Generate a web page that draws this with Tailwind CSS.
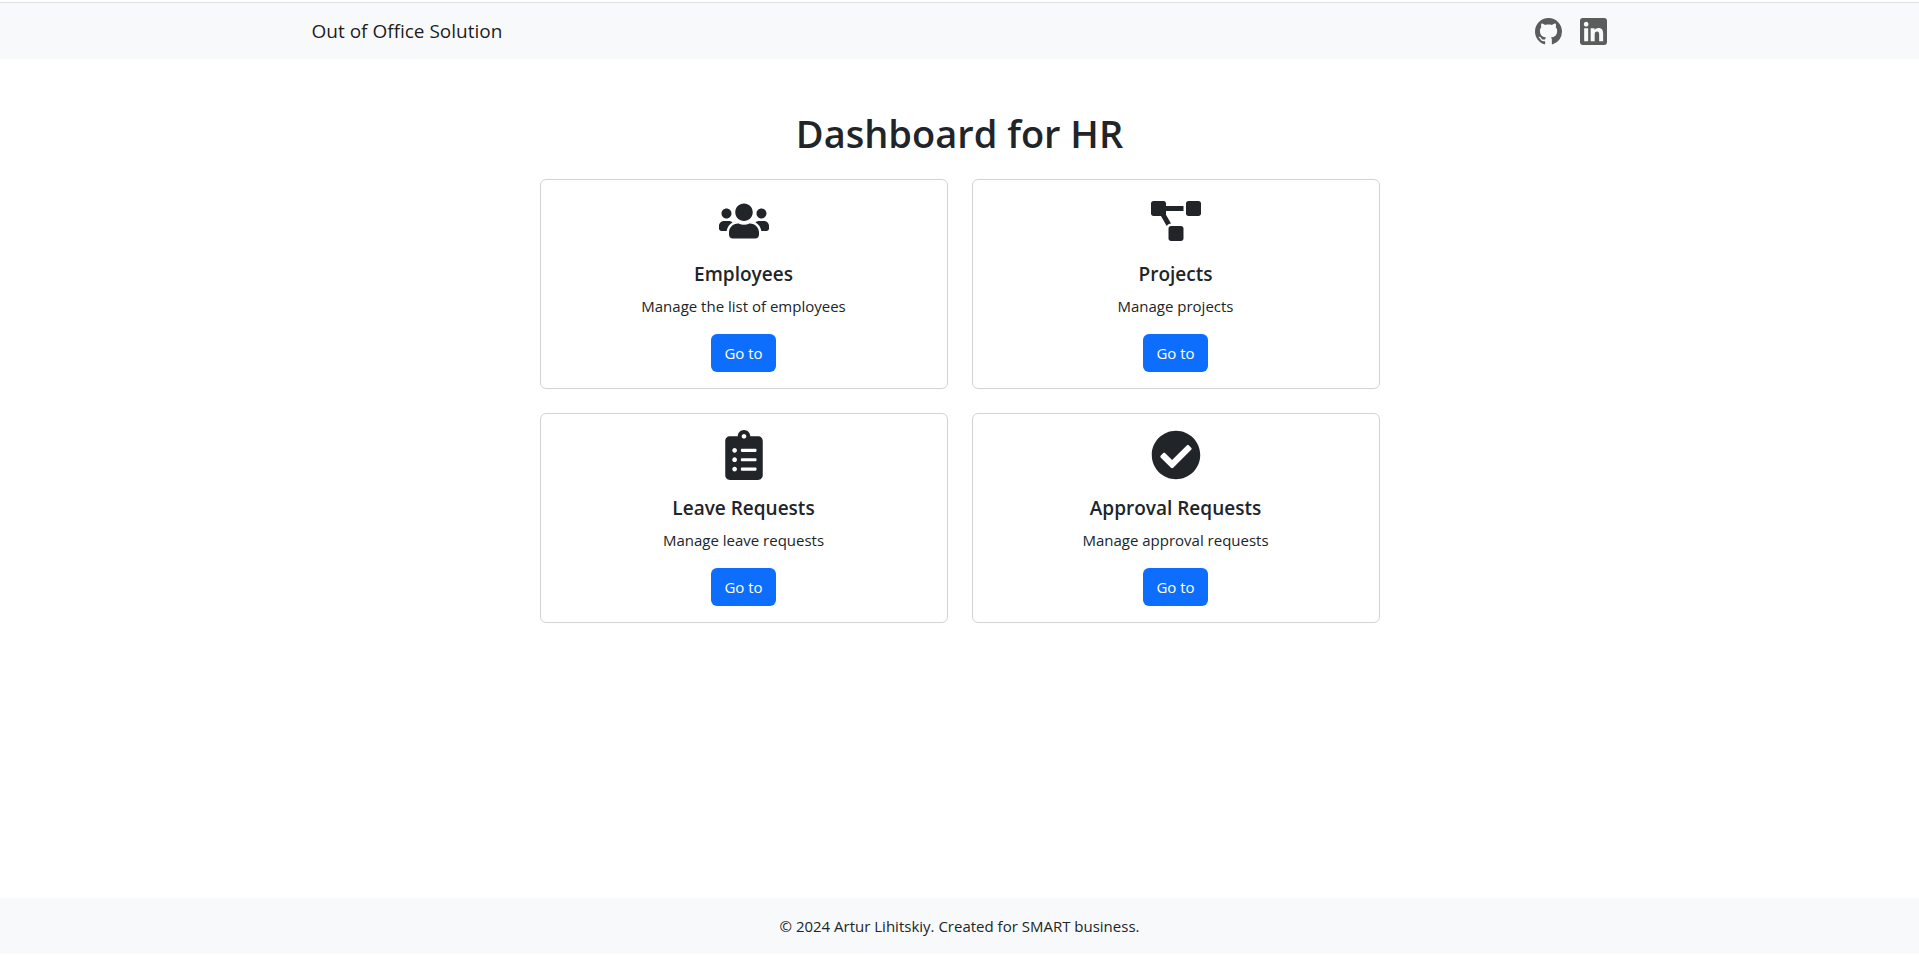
<!DOCTYPE html>
<html lang="en">
<head>
<meta charset="utf-8">
<meta name="viewport" content="width=device-width, initial-scale=1">
<title>Out of Office Solution</title>
<script src="https://cdn.jsdelivr.net/npm/@tailwindcss/browser@4"></script>
</head>
<body class="flex min-h-screen flex-col bg-white pt-[2px] pb-px font-['Open_Sans',sans-serif] text-[15px] leading-6 text-[#212529]">
<header class="border-t border-[#dee2e6] bg-[#f8f9fa]">
  <nav class="mx-auto flex h-14 w-full max-w-[1320px] items-center justify-between pr-[13px] pl-3">
    <a href="#" class="text-[19px] leading-[30px] text-black/90">Out of Office Solution</a>
    <div class="flex items-center gap-[18px] text-[#5c5c5c]">
      <a href="#" aria-label="GitHub"><svg class="size-[27px]" viewBox="0 0 16 16" fill="currentColor"><path d="M8 0C3.58 0 0 3.58 0 8c0 3.54 2.29 6.53 5.47 7.59.4.07.55-.17.55-.38 0-.19-.01-.82-.01-1.49-2.01.37-2.53-.49-2.69-.94-.09-.23-.48-.94-.82-1.13-.28-.15-.68-.52-.01-.53.63-.01 1.08.58 1.23.82.72 1.21 1.87.87 2.33.66.07-.52.28-.87.51-1.07-1.78-.2-3.64-.89-3.64-3.95 0-.87.31-1.59.82-2.15-.08-.2-.36-1.02.08-2.12 0 0 .67-.21 2.2.82.64-.18 1.32-.27 2-.27s1.36.09 2 .27c1.53-1.04 2.2-.82 2.2-.82.44 1.1.16 1.92.08 2.12.51.56.82 1.27.82 2.15 0 3.07-1.87 3.75-3.65 3.95.29.25.54.73.54 1.48 0 1.07-.01 1.93-.01 2.2 0 .21.15.46.55.38A8.01 8.01 0 0 0 16 8c0-4.42-3.58-8-8-8"/></svg></a>
      <a href="#" aria-label="LinkedIn"><svg class="size-[27px]" viewBox="0 0 448 448" fill="currentColor"><path d="M404 0H44C19.700 0 0 19.700 0 44v360c0 24.300 19.700 44 44 44h360c24.300 0 44-19.700 44-44V44C448 19.700 428.300 0 404 0zM135.400 384H69V170.200h66.500V384zm-33.200-243c-21.300 0-38.500-17.300-38.500-38.500S80.900 64 102.200 64c21.200 0 38.500 17.300 38.500 38.500 0 21.300-17.200 38.500-38.500 38.500zm282.100 243h-66.400V280c0-24.800-.5-56.700-34.500-56.700-34.600 0-39.900 27-39.900 54.900V384h-66.400V170.200h63.700v29.200h.9c8.900-16.800 30.600-34.500 62.900-34.500 67.200 0 79.700 44.300 79.700 101.900V384z"/></svg></a>
    </div>
  </nav>
</header>
<main class="mx-auto w-full max-w-[840px] grow pt-[50px]">
  <h1 class="mb-[22px] text-center text-[38px] leading-[48px] font-semibold">Dashboard for HR</h1>
  <div class="grid gap-6 sm:grid-cols-2">
    <section class="flex flex-col items-center rounded-md border border-[#d3d3d4] p-4 text-center">
      <svg class="mb-4 size-[50px]" viewBox="0 0 640 512" fill="currentColor"><path d="M96 224c35.300 0 64-28.700 64-64s-28.700-64-64-64-64 28.700-64 64 28.700 64 64 64zm448 0c35.300 0 64-28.700 64-64s-28.700-64-64-64-64 28.700-64 64 28.700 64 64 64zm32 32h-64c-17.600 0-33.500 7.100-45.100 18.600 40.300 22.100 68.900 62 75.100 109.400h66c17.700 0 32-14.300 32-32v-32c0-35.300-28.700-64-64-64zm-256 0c61.900 0 112-50.100 112-112S381.900 32 320 32 208 82.100 208 144s50.100 112 112 112zm76.800 32h-8.300c-20.800 10-43.900 16-68.500 16s-47.600-6-68.500-16h-8.300C179.600 288 128 339.600 128 403.200V432c0 26.500 21.500 48 48 48h288c26.500 0 48-21.500 48-48v-28.800c0-63.600-51.600-115.200-115.200-115.200zm-223.700-13.400C161.500 263.100 145.600 256 128 256H64c-35.300 0-64 28.700-64 64v32c0 17.700 14.300 32 32 32h65.900c6.300-47.400 34.900-87.300 75.200-109.400z"/></svg>
      <h2 class="mb-2 text-[19px] leading-6 font-semibold">Employees</h2>
      <p class="mb-4">Manage the list of employees</p>
      <button type="button" class="h-[38px] rounded-md bg-[#0d6efd] px-[13px] text-white">Go to</button>
    </section>
    <section class="flex flex-col items-center rounded-md border border-[#d3d3d4] p-4 text-center">
      <svg class="mb-4 size-[50px]" viewBox="0 0 640 512" fill="currentColor"><path d="M384 320H256c-17.670 0-32 14.330-32 32v128c0 17.670 14.330 32 32 32h128c17.670 0 32-14.330 32-32V352c0-17.670-14.330-32-32-32zM192 32c0-17.670-14.330-32-32-32H32C14.330 0 0 14.330 0 32v128c0 17.670 14.330 32 32 32h95.720l73.160 128.040C211.980 300.980 232.400 288 256 288h.28L192 175.510V128h224V64H192V32zM608 0H480c-17.670 0-32 14.330-32 32v128c0 17.670 14.330 32 32 32h128c17.670 0 32-14.330 32-32V32c0-17.670-14.330-32-32-32z"/></svg>
      <h2 class="mb-2 text-[19px] leading-6 font-semibold">Projects</h2>
      <p class="mb-4">Manage projects</p>
      <button type="button" class="h-[38px] rounded-md bg-[#0d6efd] px-[13px] text-white">Go to</button>
    </section>
    <section class="flex flex-col items-center rounded-md border border-[#d3d3d4] p-4 text-center">
      <svg class="mb-4 size-[50px]" viewBox="0 0 384 512" fill="currentColor"><path d="M336 64h-80c0-35.300-28.700-64-64-64s-64 28.700-64 64H48C21.500 64 0 85.500 0 112v352c0 26.500 21.500 48 48 48h288c26.500 0 48-21.500 48-48V112c0-26.500-21.500-48-48-48zM96 424c-13.300 0-24-10.700-24-24s10.700-24 24-24 24 10.700 24 24-10.700 24-24 24zm0-96c-13.300 0-24-10.700-24-24s10.700-24 24-24 24 10.700 24 24-10.700 24-24 24zm0-96c-13.300 0-24-10.700-24-24s10.700-24 24-24 24 10.700 24 24-10.700 24-24 24zm96-192c13.300 0 24 10.700 24 24s-10.700 24-24 24-24-10.700-24-24 10.700-24 24-24zm128 368c0 4.400-3.600 8-8 8H168c-4.400 0-8-3.600-8-8v-16c0-4.400 3.600-8 8-8h144c4.400 0 8 3.600 8 8v16zm0-96c0 4.400-3.600 8-8 8H168c-4.400 0-8-3.600-8-8v-16c0-4.400 3.600-8 8-8h144c4.400 0 8 3.600 8 8v16zm0-96c0 4.400-3.600 8-8 8H168c-4.400 0-8-3.600-8-8v-16c0-4.400 3.600-8 8-8h144c4.400 0 8 3.600 8 8v16z"/></svg>
      <h2 class="mb-2 text-[19px] leading-6 font-semibold">Leave Requests</h2>
      <p class="mb-4">Manage leave requests</p>
      <button type="button" class="h-[38px] rounded-md bg-[#0d6efd] px-[13px] text-white">Go to</button>
    </section>
    <section class="flex flex-col items-center rounded-md border border-[#d3d3d4] p-4 text-center">
      <svg class="mb-4 size-[50px]" viewBox="0 0 512 512" fill="currentColor"><path d="M504 256c0 136.967-111.033 248-248 248S8 392.967 8 256 119.033 8 256 8s248 111.033 248 248zM227.314 387.314l184-184c6.248-6.248 6.248-16.379 0-22.627l-22.627-22.627c-6.248-6.249-16.379-6.249-22.628 0L216 308.118l-70.059-70.059c-6.248-6.248-16.379-6.248-22.628 0l-22.627 22.627c-6.248 6.248-6.248 16.379 0 22.627l104 104c6.249 6.249 16.379 6.249 22.628.001z"/></svg>
      <h2 class="mb-2 text-[19px] leading-6 font-semibold">Approval Requests</h2>
      <p class="mb-4">Manage approval requests</p>
      <button type="button" class="h-[38px] rounded-md bg-[#0d6efd] px-[13px] text-white">Go to</button>
    </section>
  </div>
</main>
<footer class="bg-[#f8f9fa] p-4 text-center">© 2024 Artur Lihitskiy. Created for SMART business.</footer>
</body>
</html>
